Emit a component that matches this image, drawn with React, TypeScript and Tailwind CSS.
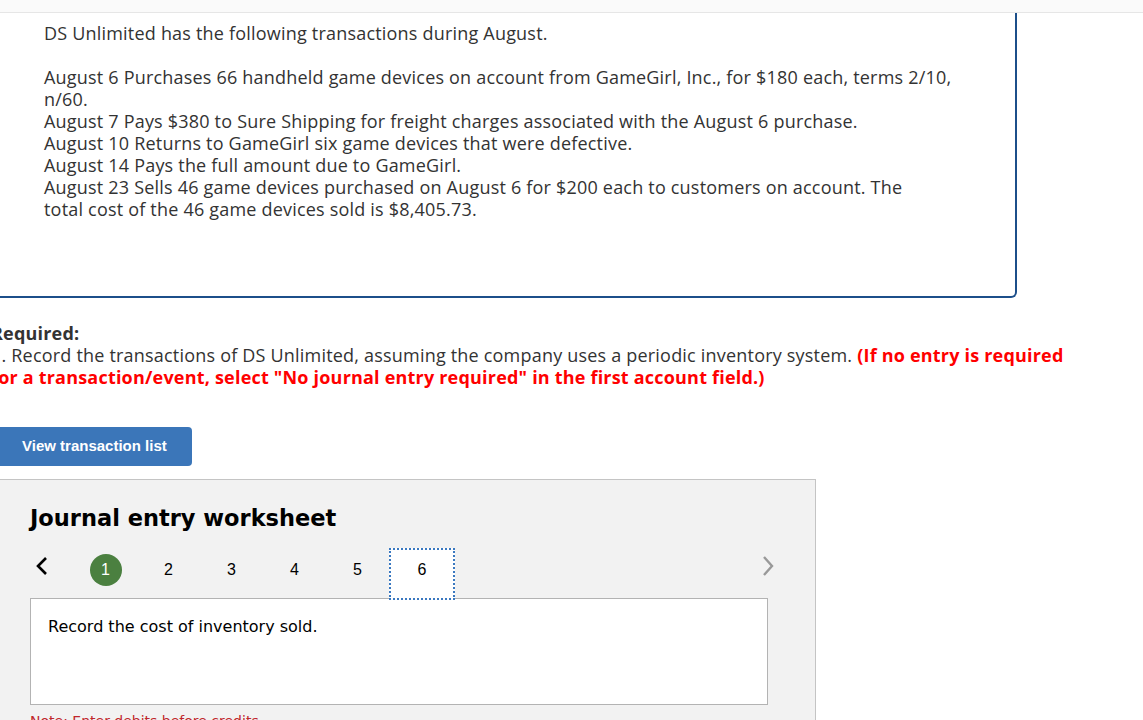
import React from 'react';

const body = { fontFamily: '"Open Sans", Lato, Arial, sans-serif' };
const verdana = { fontFamily: '"DejaVu Sans", Verdana, sans-serif' };
const arial = { fontFamily: '"Liberation Sans", Arial, sans-serif' };

const steps = [2, 3, 4, 5];

export default function App() {
  return (
    <div className="min-h-[720px] w-[1143px] overflow-hidden bg-white text-[#333]" style={body}>
      <div className="h-[13px] border-b border-[#e6e6e6] bg-[#fafafa]" />

      {/* question box */}
      <div className="h-[285px] w-[1017px] rounded-br-[6px] border-r-2 border-b-2 border-[#1c4f8a] pl-[44px] pt-[9px] text-[18px] leading-[22px] tracking-[0.2px]">
        <p>DS Unlimited has the following transactions during August.</p>
        <div className="mt-[22px]">
          <span className="block">August 6 Purchases 66 handheld game devices on account from GameGirl, Inc., for $180 each, terms 2/10,</span>
          <span className="block">n/60.</span>
          <span className="block">August 7 Pays $380 to Sure Shipping for freight charges associated with the August 6 purchase.</span>
          <span className="block">August 10 Returns to GameGirl six game devices that were defective.</span>
          <span className="block">August 14 Pays the full amount due to GameGirl.</span>
          <span className="block">August 23 Sells 46 game devices purchased on August 6 for $200 each to customers on account. The</span>
          <span className="block">total cost of the 46 game devices sold is $8,405.73.</span>
        </div>
      </div>

      {/* required */}
      <div className="ml-[-9px] mt-[24px] whitespace-nowrap text-[18px] leading-[22px] tracking-[0.2px]">
        <p className="font-bold">Required:</p>
        <p>
          1. Record the transactions of DS Unlimited, assuming the company uses a periodic inventory system.{' '}
          <span className="font-bold text-[#f00]">(If no entry is required</span>
        </p>
        <p className="font-bold text-[#f00]">for a transaction/event, select "No journal entry required" in the first account field.)</p>
      </div>

      <button
        className="mt-[39px] flex h-[39px] w-[192px] items-center rounded-r-[4px] bg-[#3b76b9] pl-[22px] text-[15px] font-bold text-white"
        style={arial}
      >
        View transaction list
      </button>

      {/* worksheet */}
      <div className="mt-[13px] h-[260px] w-[816px] border-t border-r border-[#c4c4c4] bg-[#f2f2f2] pl-[30px] pr-[48px]">
        <h2 className="mt-[24px] text-[22.5px] font-bold leading-[28px] text-black" style={verdana}>
          Journal entry worksheet
        </h2>

        <div className="mt-[16px] flex h-[52px] items-center" style={arial}>
          <svg width="14" height="20" viewBox="0 0 14 20" className="ml-[5px] mt-[-16px]">
            <path d="M11 2 L3 10 L11 18" fill="none" stroke="#000" strokeWidth="2.6" />
          </svg>
          <span className="ml-[25px] mt-[-9px] flex w-[63px] justify-center">
            <span className="flex h-[32px] w-[32px] items-center justify-center rounded-full bg-[#4b8040] text-[16px] text-white">
              1
            </span>
          </span>
          {steps.map(n => (
            <span key={n} className="mt-[-9px] flex w-[63px] justify-center text-[16px] text-black">
              {n}
            </span>
          ))}
          <span className="flex h-[52px] w-[66px] items-center justify-center border-2 border-dotted border-[#3a78c0] bg-white pb-[9px] text-[16px] text-black">
            6
          </span>
          <svg width="14" height="22" viewBox="0 0 14 22" className="ml-auto mr-[-8px] mt-[-16px]">
            <path d="M3 2 L11 11 L3 20" fill="none" stroke="#999" strokeWidth="2.4" />
          </svg>
        </div>

        <div className="mt-[-2px] h-[107px] w-[738px] border border-[#b3b3b3] bg-white px-[17px] pt-[16px] text-[16px] text-black" style={verdana}>
          Record the cost of inventory sold.
        </div>
        <p className="mt-[6px] text-[14px] text-[#c0272d]" style={verdana}>
          Note: Enter debits before credits.
        </p>
      </div>
    </div>
  );
}
